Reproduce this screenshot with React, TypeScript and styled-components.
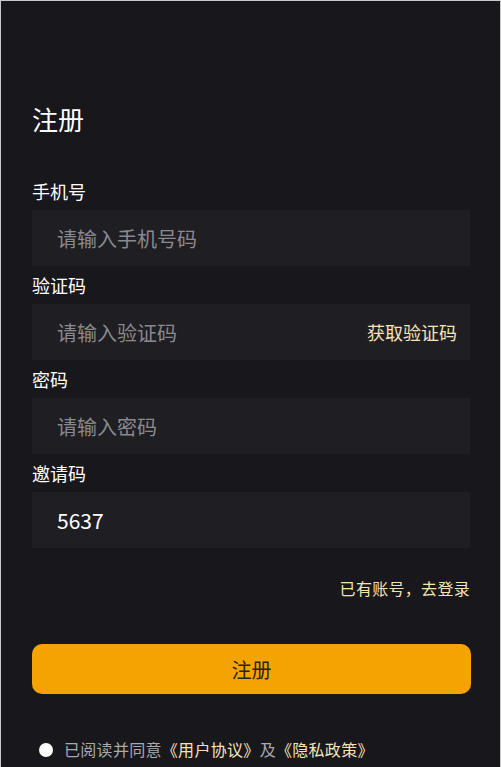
import React from "react";
import styled, { createGlobalStyle } from "styled-components";

const GlobalStyle = createGlobalStyle`
    html, body {
        margin: 0;
        padding: 0;
        background: #18171c;
    }
    * {
        box-sizing: border-box;
    }
`;

const fields = [
    { label: "手机号", placeholder: "请输入手机号码", value: "" },
    { label: "验证码", placeholder: "请输入验证码", value: "", action: "获取验证码" },
    { label: "密码", placeholder: "请输入密码", value: "" },
    { label: "邀请码", placeholder: "", value: "5637" },
];

export default function App() {
    return (
        <>
            <GlobalStyle />
            <Page>
                <Title>注册</Title>
                {fields.map((field) => (
                    <Field key={field.label}>
                        <Label>{field.label}</Label>
                        <InputBox>
                            <Input
                                defaultValue={field.value}
                                placeholder={field.placeholder}
                            />
                            {field.action && <CodeButton>{field.action}</CodeButton>}
                        </InputBox>
                    </Field>
                ))}
                <LoginRow>
                    <LoginLink>已有账号，去登录</LoginLink>
                </LoginRow>
                <SubmitButton>注册</SubmitButton>
                <Agreement>
                    <Radio />
                    <AgreeText>
                        已阅读并同意<Link>《用户协议》</Link>及<Link>《隐私政策》</Link>
                    </AgreeText>
                </Agreement>
            </Page>
        </>
    );
}

const Page = styled.div`
    min-height: 767px;
    padding: 102px 30px 0 31px;
    border: 1px solid #c9c9cc;
    border-bottom: none;
    background: #18171c;
    font-family: "Noto Sans CJK SC", "Microsoft YaHei", sans-serif;
    display: flex;
    flex-direction: column;
`;

const Title = styled.h1`
    margin: 0 0 37px;
    font-size: 26px;
    line-height: 32px;
    font-weight: 400;
    color: #fff;
`;

const Field = styled.div`
    display: flex;
    flex-direction: column;
    margin-top: 10px;
`;

const Label = styled.div`
    font-size: 18px;
    line-height: 18px;
    color: #fff;
    margin-bottom: 10px;
`;

const InputBox = styled.div`
    display: flex;
    align-items: center;
    height: 56px;
    background: #1f1e23;
    padding: 0 13px 0 25px;
`;

const Input = styled.input`
    flex: 1;
    min-width: 0;
    height: 100%;
    padding: 0;
    border: none;
    outline: none;
    background: transparent;
    color: #fff;
    font-family: "Noto Sans CJK SC", sans-serif;
    font-size: 21px;

    &::placeholder {
        color: #8a898e;
        font-size: 20px;
    }
`;

const CodeButton = styled.span`
    font-size: 18px;
    color: #f6e2b8;
    white-space: nowrap;
`;

const LoginRow = styled.div`
    display: flex;
    justify-content: flex-end;
    margin-top: 30px;
`;

const LoginLink = styled.span`
    font-size: 16px;
    line-height: 21px;
    letter-spacing: 0.3px;
    color: #f6e2b8;
`;

const SubmitButton = styled.button`
    margin: 45px -1px 0 0;
    height: 50px;
    border: none;
    border-radius: 10px;
    background: #f5a300;
    color: #2a2418;
    font-family: "Noto Sans CJK SC", sans-serif;
    font-size: 20px;
`;

const Agreement = styled.div`
    display: flex;
    align-items: center;
    gap: 11px;
    margin-top: 45px;
    padding-left: 7px;
`;

const Radio = styled.span`
    width: 14px;
    height: 14px;
    border-radius: 50%;
    background: #fff;
    flex-shrink: 0;
`;

const AgreeText = styled.span`
    font-size: 16px;
    line-height: 21px;
    letter-spacing: 0.3px;
    color: #a9a8ad;
`;

const Link = styled.span`
    color: #f6e2b8;
`;
